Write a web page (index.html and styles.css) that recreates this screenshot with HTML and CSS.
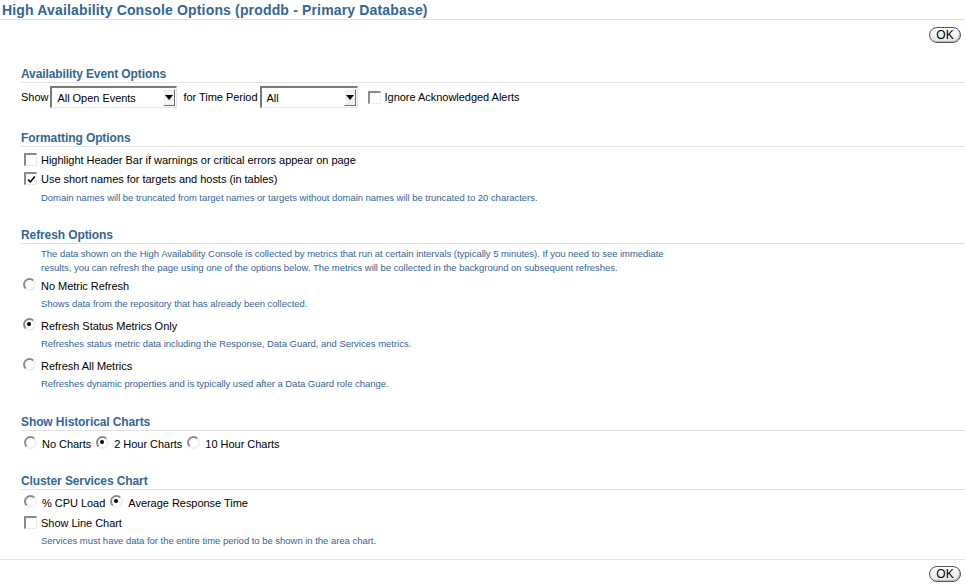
FILE: index.html
```html
<!DOCTYPE html>
<html lang="en">
<head>
<meta charset="utf-8">
<title>High Availability Console Options</title>
<link rel="stylesheet" href="styles.css">
</head>
<body>
<h1 class="page-title">High Availability Console Options (proddb - Primary Database)</h1>
<div class="btn-bar btn-top"><button class="ok-btn" type="button">OK</button></div>

<div class="content">
  <section class="sec sec-avail">
    <h2 class="sec-title">Availability Event Options</h2>
    <div class="sel-row">
      <span class="lbl">Show</span>
      <span class="select sel-events"><span class="sel-val">All Open Events</span><span class="sel-btn"><span class="tri"></span></span></span>
      <span class="lbl lbl-period">for Time Period</span>
      <span class="select sel-period"><span class="sel-val">All</span><span class="sel-btn"><span class="tri"></span></span></span>
      <span class="chk chk-inline"></span>
      <span class="lbl">Ignore Acknowledged Alerts</span>
    </div>
  </section>

  <section class="sec sec-format">
    <h2 class="sec-title">Formatting Options</h2>
    <div class="opts">
      <div class="chk-row"><span class="chk"></span><span class="lbl">Highlight Header Bar if warnings or critical errors appear on page</span></div>
      <div class="chk-row"><span class="chk checked"><svg width="9" height="9" viewBox="0 0 9 9"><path d="M1.2 4.6 L3.4 6.9 L7.8 1.6" fill="none" stroke="#000" stroke-width="1.6"/></svg></span><span class="lbl">Use short names for targets and hosts (in tables)</span></div>
      <p class="help help-fmt">Domain names will be truncated from target names or targets without domain names will be truncated to 20 characters.</p>
    </div>
  </section>

  <section class="sec sec-refresh">
    <h2 class="sec-title">Refresh Options</h2>
    <p class="help intro">The data shown on the High Availability Console is collected by metrics that run at certain intervals (typically 5 minutes). If you need to see immediate<br>results, you can refresh the page using one of the options below. The metrics will be collected in the background on subsequent refreshes.</p>
    <div class="radio-opt">
      <div class="radio-row"><span class="radio"></span><span class="lbl">No Metric Refresh</span></div>
      <p class="help">Shows data from the repository that has already been collected.</p>
    </div>
    <div class="radio-opt">
      <div class="radio-row"><span class="radio on"></span><span class="lbl">Refresh Status Metrics Only</span></div>
      <p class="help">Refreshes status metric data including the Response, Data Guard, and Services metrics.</p>
    </div>
    <div class="radio-opt">
      <div class="radio-row"><span class="radio"></span><span class="lbl">Refresh All Metrics</span></div>
      <p class="help">Refreshes dynamic properties and is typically used after a Data Guard role change.</p>
    </div>
  </section>

  <section class="sec sec-hist">
    <h2 class="sec-title">Show Historical Charts</h2>
    <div class="radio-line">
      <span class="radio"></span><span class="lbl">No Charts</span>
      <span class="radio on"></span><span class="lbl">2 Hour Charts</span>
      <span class="radio"></span><span class="lbl">10 Hour Charts</span>
    </div>
  </section>

  <section class="sec sec-cluster">
    <h2 class="sec-title">Cluster Services Chart</h2>
    <div class="radio-line">
      <span class="radio"></span><span class="lbl">% CPU Load</span>
      <span class="radio on"></span><span class="lbl">Average Response Time</span>
    </div>
    <div class="chk-row"><span class="chk"></span><span class="lbl">Show Line Chart</span></div>
    <p class="help help-cluster">Services must have data for the entire time period to be shown in the area chart.</p>
  </section>
</div>

<div class="foot-line"></div>
<div class="btn-bar btn-bottom"><button class="ok-btn" type="button">OK</button></div>
</body>
</html>
```
FILE: styles.css
```css
html, body {
  margin: 0;
  padding: 0;
  background: #ffffff;
}
body {
  font-family: "Liberation Sans", Arial, sans-serif;
  font-size: 11px;
  color: #000;
  width: 965px;
}
.page-title {
  margin: 0;
  padding: 2px 0 0 2px;
  height: 17px;
  line-height: 17px;
  font-size: 14px;
  font-weight: bold;
  color: #336699;
  border-bottom: 1px solid #e3e3e3;
  letter-spacing: 0.16px;
}
.btn-bar {
  display: flex;
  justify-content: flex-end;
  padding-right: 4px;
}
.btn-top { padding-top: 7px; }
.btn-bottom { padding-top: 6px; }
.ok-btn {
  width: 32px;
  height: 16px;
  padding: 0;
  margin: 0;
  border: 1px solid #555;
  border-radius: 8px;
  background: linear-gradient(#ffffff, #e4e4e4);
  font-family: "Liberation Sans", Arial, sans-serif;
  font-size: 12px;
  line-height: 14px;
  color: #000;
  box-shadow: inset -1px -1px 0 #bbb;
}
.content {
  padding-left: 21px;
}
.sec-title {
  margin: 0;
  padding: 0 0 1px 0;
  height: 14px;
  line-height: 14px;
  font-size: 12px;
  font-weight: bold;
  color: #336699;
  border-bottom: 1px solid #e3e3e3;
  letter-spacing: -0.1px;
}
.sec-avail { margin-top: 24px; }
.sec-format { margin-top: 23px; }
.sec-refresh { margin-top: 23px; }
.sec-hist { margin-top: 24px; }
.sec-cluster { margin-top: 20px; }

.lbl {
  letter-spacing: -0.03px;
  white-space: nowrap;
}
.sel-row {
  display: flex;
  align-items: center;
  margin-top: 3px;
  height: 22px;
}
.select {
  position: relative;
  display: flex;
  align-items: center;
  box-sizing: border-box;
  height: 22px;
  margin-left: 2px;
  background: #fff;
  border-top: 2px solid #7a7a7a;
  border-left: 2px solid #7a7a7a;
  border-right: 1px solid #e6e6e6;
  border-bottom: 1px solid #e6e6e6;
}
.sel-events { width: 127px; }
.sel-period { width: 98px; }
.sel-val {
  flex: 1;
  padding-left: 5px;
  letter-spacing: -0.03px;
  white-space: nowrap;
}
.sel-btn {
  display: flex;
  align-items: center;
  justify-content: center;
  box-sizing: border-box;
  width: 12px;
  height: 17px;
  margin-right: 1px;
  background: #f2f2f2;
  border-top: 1px solid #fff;
  border-left: 1px solid #fff;
  border-right: 1px solid #6e6e6e;
  border-bottom: 1px solid #6e6e6e;
}
.tri {
  width: 0;
  height: 0;
  border-left: 4px solid transparent;
  border-right: 4px solid transparent;
  border-top: 5px solid #000;
}
.lbl-period { margin-left: 6px; }
.chk {
  display: inline-flex;
  align-items: center;
  justify-content: center;
  box-sizing: border-box;
  width: 13px;
  height: 13px;
  background: #fff;
  border-top: 2px solid #8a8a8a;
  border-left: 2px solid #8a8a8a;
  border-right: 1px solid #ececec;
  border-bottom: 1px solid #ececec;
  flex: none;
}
.chk svg { display: block; }
.chk-inline { margin-left: 10px; margin-right: 4px; }
.opts { margin-top: 3px; }
.chk-row {
  display: flex;
  align-items: center;
  height: 19px;
  padding-left: 3px;
}
.chk-row .chk { margin-right: 4px; }
.help {
  margin: 0;
  padding-left: 20px;
  font-size: 9.5px;
  line-height: 14px;
  color: #336699;
  letter-spacing: -0.03px;
}
.help-fmt { margin-top: 3px; }
.intro { margin-top: 3px; }
.radio-opt { margin-top: 5px; }
.radio-opt:first-of-type { margin-top: 1px; }
.radio-opt .help { margin-top: 1px; }
.radio-row, .radio-line {
  display: flex;
  align-items: center;
  height: 20px;
}
.radio-row { padding-left: 2px; }
.radio-line { margin-top: 3px; padding-left: 3px; }
.radio {
  position: relative;
  box-sizing: border-box;
  width: 13px;
  height: 13px;
  border-radius: 50%;
  background: #fff;
  border: 2px solid;
  border-color: #8a8a8a #f0f0f0 #f0f0f0 #8a8a8a;
  margin-top: -4px;
  flex: none;
}
.radio.on::after {
  content: "";
  position: absolute;
  left: 2px;
  top: 2px;
  width: 4px;
  height: 4px;
  border-radius: 50%;
  background: #000;
}
.radio-row .radio { margin-right: 5px; }
.radio-line .radio { margin-right: 5px; }
.radio-line .lbl { margin-right: 5px; }
.help-cluster { margin-top: 2px; }
.foot-line {
  margin-top: 11px;
  height: 0;
  border-top: 1px solid #e3e3e3;
}
```
